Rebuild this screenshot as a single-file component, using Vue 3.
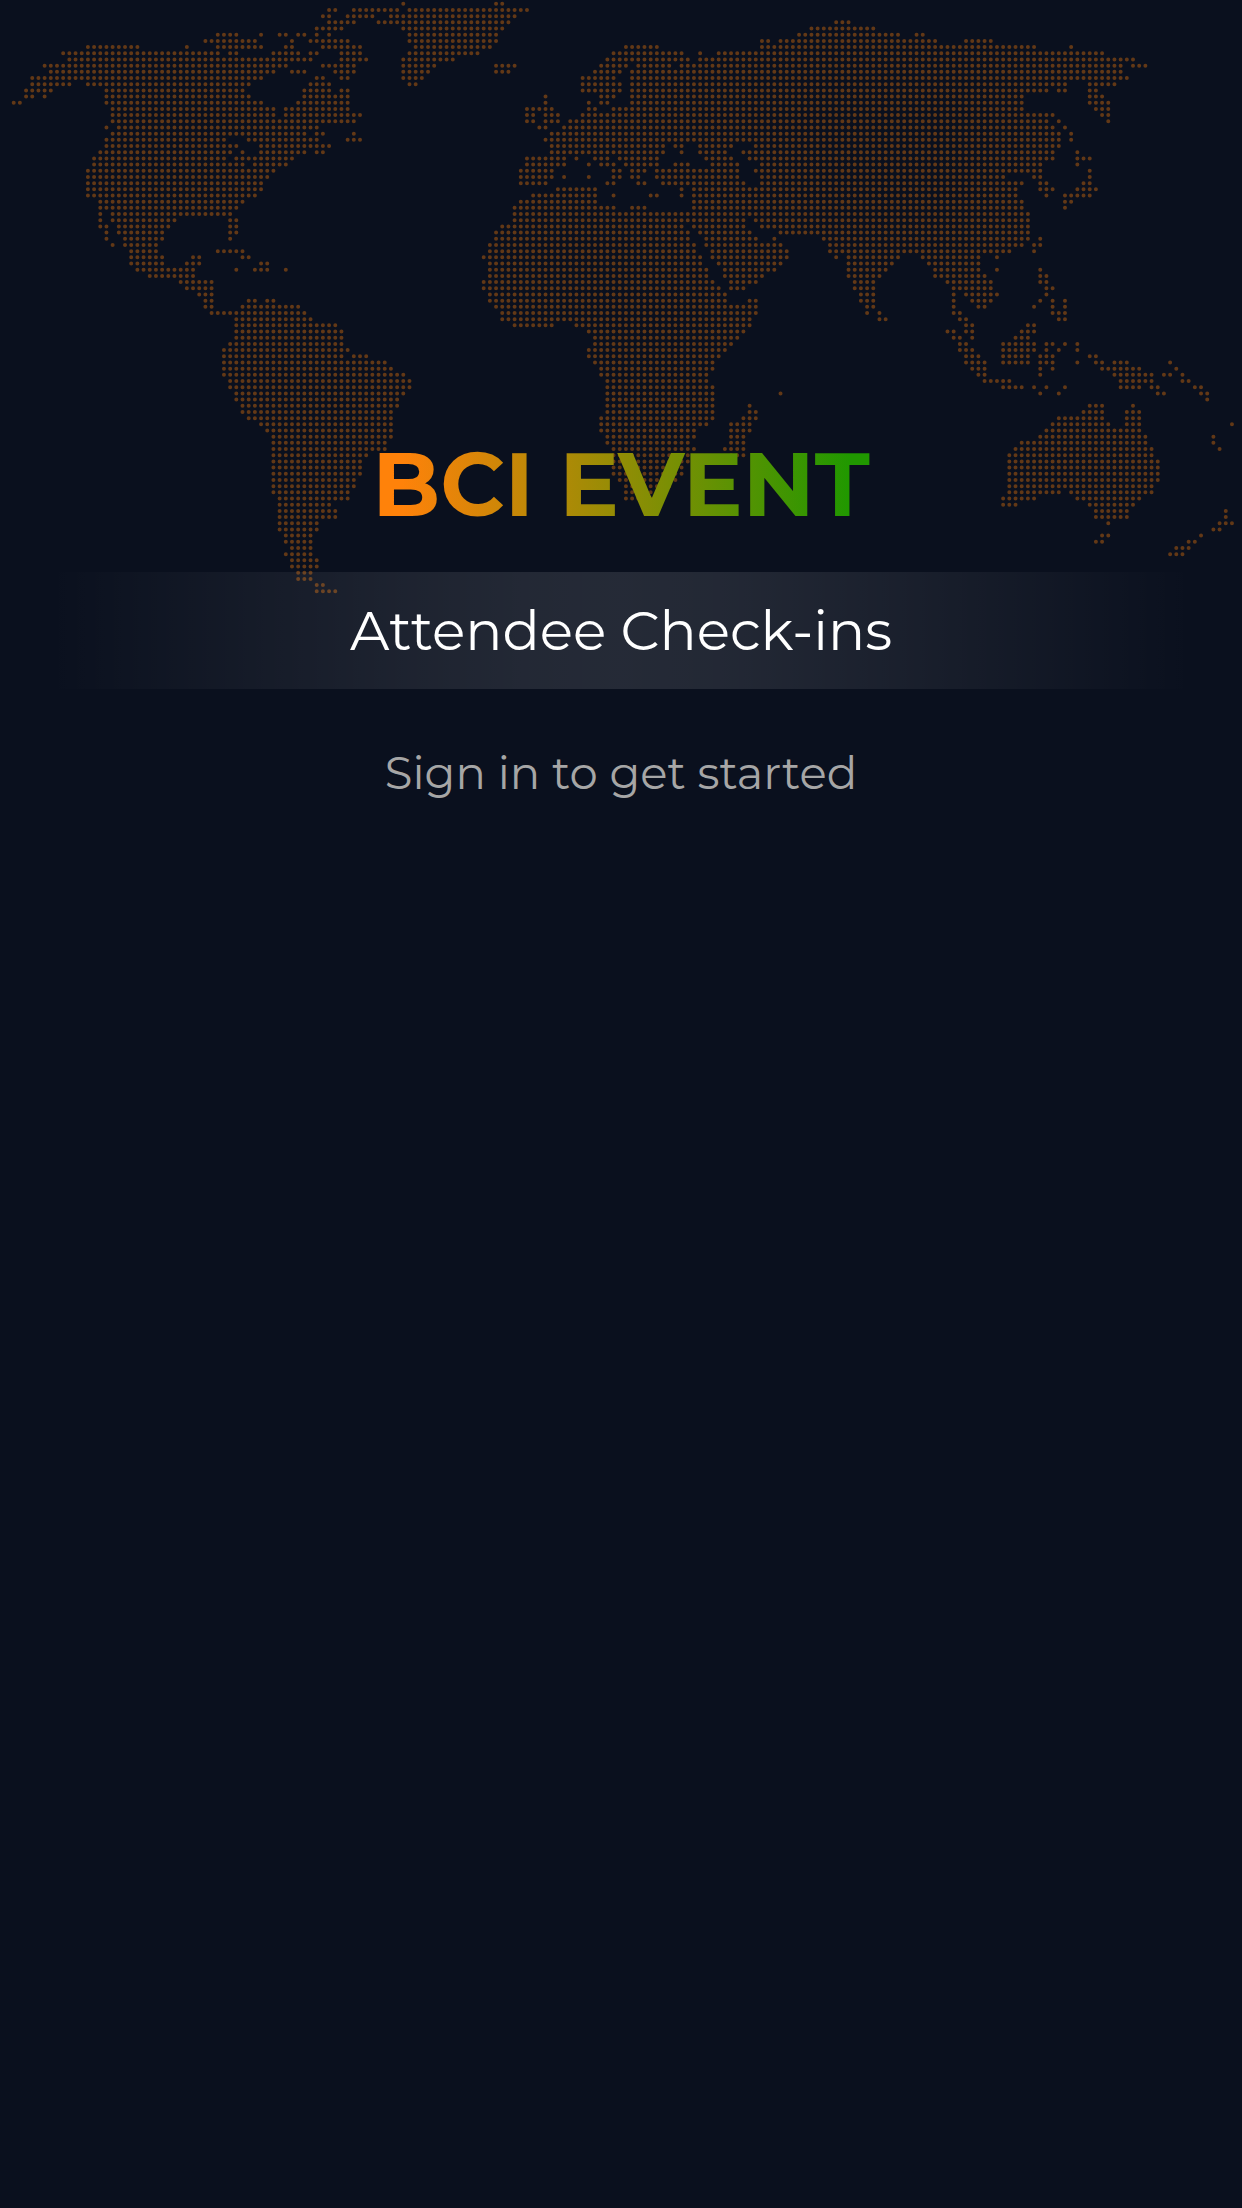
<script setup>
const pitch = 6.184
const originX = 13.7
const originY = 3.8

// One entry per latitude row, each a list of "first-last" dot columns.
const rows = `63 78-79
51-52 55-62 64-83
50-51 54-58 61-81
51-55 59-80 133-135
49-53 63-79 129-139
33-36 40 43-44 46-47 49 51 64-78 127-143 146-147
31-39 45 48-54 64-78 121-122 124-149 154-158
12-20 28 33-40 44-45 50-56 65-77 99-104 121-165 171
8-33 35-36 42-46 48-49 53-56 64-75 97-108 111 114-176
9-48 53-57 63-71 96-109 111-181
5-44 50-55 63-68 78-81 95-99 101-106 108-179 181-183
6-42 45-47 52-55 63-67 78-80 94-98 100-179
3-40 49-50 53-54 63-66 92-97 100-180
3-9 12-38 48-51 64-65 92-98 100-170 174-178
2-6 15-37 47-51 53-54 92-98 100-167 169-170 174-175
2-3 5 15-38 47-54 86 95-97 100-163 174-176
0-1 15-40 46-54 86 93 95-96 100-163 174-177
16-42 44-54 83-87 93-94 97-163 175-177
16-42 44-56 83-84 86-88 92-168 176-177
16-55 83-84 86-88 90-167 169 177
15 17-49 85-86 89-168 170
16-47 49-50 55 87-169 171
15-34 38-49 54-56 86-169 171
15-36 40-51 87-105 107-108 111-116 120-169
14-35 37 40-47 49-50 87-105 108 111-115 118-168 172
13-34 36-45 83-89 91 94-96 98-104 112-116 119-168 172-174
13-37 39-44 83-89 93 95-97 99-104 107-109 113-117 121-166 172
12-42 82-87 97-98 100-102 104-117 120-166 174
12-41 82-87 89 93 97-98 100-101 104-117 121-160 165-166 174
12-40 82-86 96-97 101-102 105-118 121-163 166-167 173-174
12-40 88-94 108 110-162 166-168 172-175
12-39 84-94 97 103-104 108 110-162 167 170-174
14-37 82-94 110-163 170-171
14-36 81-97 100-102 110-163 170
14 16-35 81-164
14 16-26 35-36 81-118 120-164
14-15 17-25 35-36 79-108 110-118 121-164
15 17-24 35-36 78-109 111-119 124-164
15 18-24 35 78-109 112-120 123 131-164 166
16 18-23 77-110 112-124 132-163 165-166
19-23 33-37 77-110 113-125 132-161 165
19-24 29-30 37-38 76-111 113-125 133 135-143 147-156 159
19-24 28-30 40-41 77-111 114-124 135-142 148-156
20-29 36 39-41 44 77-112 115-123 135-141 149-156 159 166
22-29 77-112 115-121 135-140 149-157 166-167
27-32 76-113 116-120 136-139 151-158 166-167
28-32 76-114 116-118 136-139 152-158 167-168
30-32 77-115 137-139 152 154-159 167
31-32 38-39 41-42 77-115 119-120 137-139 152 155-158 166 168 170
31-32 37-46 78-120 138-139 152 156-157 165 168 170
32-47 79-120 138 140 152-153 168-170
36-48 79-119 140-141 153-154 169-170
36-52 81-87 91-119 154-155 164-165
36-53 93-118 151-152 154-155 163-165
36-53 94-117 152-153 155 162-164
35-53 94-116 153-154 160-165 167-168 170 172
34-54 93-115 153-155 160-165 167 169 172
34-53 55-57 93-114 154-156 160-164 166-168 174-175
34-60 94-113 154-157 160-164 166-168 172 175-176 178-180 187
34-61 95-113 155-157 166 168 176-182 188
34-63 95-112 156-157 166 178-184 186-187 189
35-64 96-112 157-161 179-184 189-190
35-64 96-113 160-163 165 167 170 179-182 184-185 191-192
36-63 96-113 124 166 169 185-186 192-193
36-62 96-113 193
37-62 96-113 119 174-176 181
37-61 96-113 119-120 173-176 180-182
38-61 95-113 118-120 169-176 180-182
40-61 95-112 116-119 168-177 180-182 197
41-61 95-110 116-119 167-182
42-61 96-110 116-118 166-183 194
42-60 96-109 116-118 163-183 194
42-60 97-110 115-118 162-184 195
42-57 97-109 116-118 161-184
42-56 97-109 161-185
42-56 97-108 161-185
42-56 97-108 161-185
42-55 98-107 161-185
42-55 99-106 161-184
42-54 99-105 161-169 171-184
43-54 99-104 160-165 172-182
43-51 160-162 174-181
43-52 175-180 196
43-52 175-180 196
43-49 177 195-197
43-49 194-195
44-48 176-177 192
44-48 175-176 190-191
45-48 188-190
44-48 187-189
45-49
45-49
46-48
46-48
49-50
49-52`.split('\n')

// Zero-length round-capped strokes: each one paints a single dot.
const dots = rows
  .flatMap((row, r) =>
    row.split(' ').flatMap((run) => {
      const [first, last = first] = run.split('-').map(Number)
      const y = (originY + r * pitch).toFixed(2)
      return Array.from(
        { length: last - first + 1 },
        (_, i) => `M${(originX + (first + i) * pitch).toFixed(2)} ${y}h0`
      )
    })
  )
  .join('')
</script>

<template>
  <main class="screen">
    <svg class="map" viewBox="0 0 1242 600" aria-hidden="true">
      <path :d="dots" />
    </svg>
    <div class="intro">
      <h1 class="brand">BCI EVENT</h1>
      <h2 class="title">Attendee Check-ins</h2>
      <p class="hint">Sign in to get started</p>
    </div>
  </main>
</template>

<style>
body {
  margin: 0;
  background: #0a101e;
}
</style>

<style scoped>
.screen {
  position: relative;
  min-height: 100vh;
  background: #0a101e;
  font-family: Montserrat, "Open Sans", sans-serif;
}

.map {
  position: absolute;
  top: 0;
  left: 0;
  width: 100%;
}

.map path {
  fill: none;
  stroke: #623816;
  stroke-width: 4;
  stroke-linecap: round;
}

.intro {
  position: relative;
  display: flex;
  flex-direction: column;
  align-items: center;
  padding-top: 424px;
}

.brand {
  margin: 0;
  font-size: 89px;
  line-height: 120px;
  font-weight: 700;
  color: transparent;
  background: linear-gradient(90deg, #ff820a 6%, #209800 96%);
  background-clip: text;
}

.title {
  align-self: stretch;
  margin: 28px 0 0;
  font-size: 55px;
  line-height: 117px;
  font-weight: 400;
  text-align: center;
  color: #fff;
  background: linear-gradient(
    90deg,
    rgba(255, 255, 255, 0) 4%,
    rgba(255, 255, 255, 0.07) 29%,
    rgba(255, 255, 255, 0.1) 42%,
    rgba(255, 255, 255, 0.11) 50%,
    rgba(255, 255, 255, 0.1) 58%,
    rgba(255, 255, 255, 0.07) 71%,
    rgba(255, 255, 255, 0) 96%
  );
}

.hint {
  margin: 52px 0 0;
  font-size: 45px;
  line-height: 64px;
  color: #a6a6a6;
}
</style>
